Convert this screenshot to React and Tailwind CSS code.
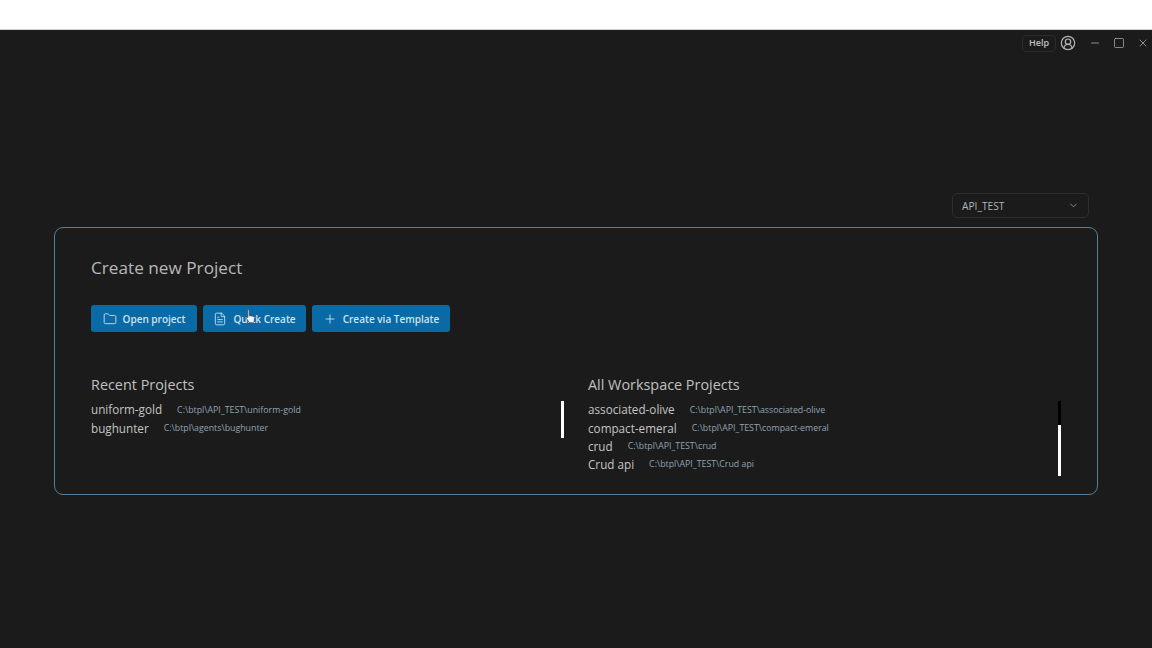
import { ChevronDown, CircleUserRound, Folder, FileText, Minus, Plus, Square, X } from 'lucide-react';

const recent = [
  { name: 'uniform-gold', path: 'C:\\btpl\\API_TEST\\uniform-gold' },
  { name: 'bughunter', path: 'C:\\btpl\\agents\\bughunter' },
];

const workspace = [
  { name: 'associated-olive', path: 'C:\\btpl\\API_TEST\\associated-olive' },
  { name: 'compact-emeral', path: 'C:\\btpl\\API_TEST\\compact-emeral' },
  { name: 'crud', path: 'C:\\btpl\\API_TEST\\crud' },
  { name: 'Crud api', path: 'C:\\btpl\\API_TEST\\Crud api' },
];

const ProjectRow = ({ name, path }) => (
  <div className="flex items-center h-[18.3px] whitespace-nowrap">
    <span className="text-[11.7px] font-medium text-[#c4c4c4]">{name}</span>
    <span className="ml-[15px] text-[8.8px] text-[#8fa3b3]">{path}</span>
  </div>
);

const ActionButton = ({ icon: Icon, label, width }) => (
  <button className={`${width} h-[27px] flex items-center justify-center gap-[6px] rounded-[3px] bg-[#0a6aa6] text-[10px] font-semibold text-[#d3e1ea]`}>
    <Icon className="w-[14px] h-[14px]" strokeWidth={1.5} />
    <span className="pt-[2px]">{label}</span>
  </button>
);

const App = () => {
  return (
    <div className="h-screen overflow-hidden flex flex-col bg-[#1b1b1b] font-['Open_Sans','Noto_Sans',sans-serif]">
      <div className="h-[30px] shrink-0 bg-white border-b border-[#d0d0d0]" />

      {/* title bar */}
      <header className="h-[26px] shrink-0 flex items-center justify-end pr-[3px] text-[#b5b5b5]">
        <div className="h-[17px] px-[6px] flex items-center rounded-[4px] border border-[#2c2c2c] text-[9px] font-semibold text-[#c0c0c0]">Help</div>
        <CircleUserRound className="ml-[4px] w-[16px] h-[16px]" strokeWidth={1.8} />
        <Minus className="ml-[13px] w-[12px] h-[12px]" strokeWidth={1.5} />
        <Square className="ml-[12px] w-[12px] h-[12px]" strokeWidth={1.4} />
        <X className="ml-[12px] w-[12px] h-[12px]" strokeWidth={1.5} />
      </header>

      <main className="flex-1 pt-[137px] px-[54px]">
        <div className="flex justify-end pr-[9px]">
          <div className="w-[137px] h-[25px] pl-[9px] pr-[9px] flex items-center justify-between rounded-[5px] border border-[#2e2e2e] text-[10.2px] text-[#b4b4b4]">
            <span className="pt-[2px]">API_TEST</span>
            <ChevronDown className="w-[11px] h-[11px] text-[#909090]" />
          </div>
        </div>

        {/* project card */}
        <section className="relative mt-[9px] w-[1044px] h-[268px] rounded-[9px] border border-[#54809c] pl-[36px] pr-[36px] pt-[29px]">
          <h1 className="text-[17.2px] leading-[22px] text-[#b8b8b8]">Create new Project</h1>

          <div className="mt-[26px] flex gap-[6px]">
            <ActionButton icon={Folder} label="Open project" width="w-[106px]" />
            <ActionButton icon={FileText} label="Quick Create" width="w-[103px]" />
            <ActionButton icon={Plus} label="Create via Template" width="w-[138px]" />
          </div>

          <div className="mt-[43px] flex">
            <div className="w-[497px] shrink-0 flex">
              <div className="flex-1">
                <h2 className="text-[14.4px] leading-[20px] text-[#c0c0c0]">Recent Projects</h2>
                <div className="mt-[6px]">
                  {recent.map((p) => <ProjectRow key={p.name} {...p} />)}
                </div>
              </div>
              <div className="w-[3px] h-[37px] mt-[26px] mr-[24px] bg-white" />
            </div>
            <div className="flex-1 flex">
              <div className="flex-1">
                <h2 className="text-[14.4px] leading-[20px] text-[#c0c0c0]">All Workspace Projects</h2>
                <div className="mt-[6px]">
                  {workspace.map((p) => <ProjectRow key={p.name} {...p} />)}
                </div>
              </div>
              <div className="w-[3px] h-[75px] mt-[26px] flex flex-col bg-white">
                <div className="h-[24px] bg-black" />
              </div>
            </div>
          </div>

          {/* cursor caught over the button */}
          <svg className="absolute left-[190px] top-[80px]" width="12" height="17" viewBox="0 0 12 17">
            <path d="M3 1.5c.8 0 1.2.5 1.2 1.2V8l1-.3 1 .2 1 .2 1.2.4c.8.3 1.1.9 1.1 1.7l-.4 3.3c-.1.7-.6 1.2-1.3 1.2H5.2c-.5 0-.9-.2-1.2-.6L1.4 10.4c-.4-.6.3-1.4 1-1l.4.3V2.7c0-.7 0-1.2.2-1.2z" fill="#f2f2f2" stroke="#333" strokeWidth="0.6" />
          </svg>
        </section>
      </main>
    </div>
  );
};

export default App;
